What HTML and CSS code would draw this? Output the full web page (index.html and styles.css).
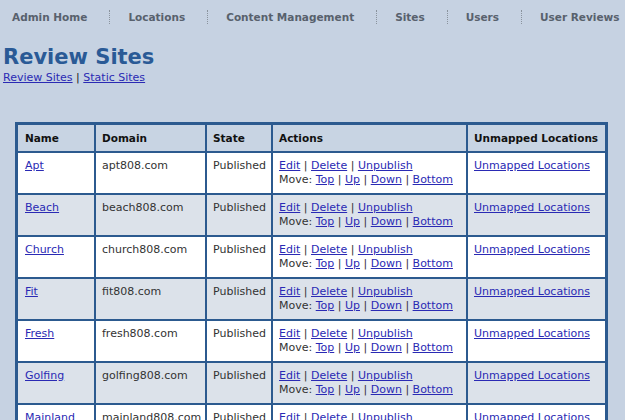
FILE: index.html
```html
<!DOCTYPE html>
<html>
<head>
<meta charset="utf-8">
<link rel="stylesheet" href="styles.css">
</head>
<body>
<ul class="nav">
  <li class="nav-item">Admin Home</li>
  <li class="nav-item">Locations</li>
  <li class="nav-item">Content Management</li>
  <li class="nav-item">Sites</li>
  <li class="nav-item">Users</li>
  <li class="nav-item last">User Reviews</li>
</ul>
<div class="content">
  <h1 class="title">Review Sites</h1>
  <div class="sublinks"><a href="#">Review Sites</a> | <a href="#">Static Sites</a></div>
  <table class="sites">
    <colgroup>
      <col class="c1"><col class="c2"><col class="c3"><col class="c4"><col class="c5">
    </colgroup>
    <thead>
      <tr><th>Name</th><th>Domain</th><th>State</th><th>Actions</th><th>Unmapped Locations</th></tr>
    </thead>
    <tbody>
      <tr><td><a href="#">Apt</a></td><td>apt808.com</td><td>Published</td><td><a href="#">Edit</a> | <a href="#">Delete</a> | <a href="#">Unpublish</a><br>Move: <a href="#">Top</a> | <a href="#">Up</a> | <a href="#">Down</a> | <a href="#">Bottom</a></td><td><a href="#">Unmapped Locations</a></td></tr>
      <tr><td><a href="#">Beach</a></td><td>beach808.com</td><td>Published</td><td><a href="#">Edit</a> | <a href="#">Delete</a> | <a href="#">Unpublish</a><br>Move: <a href="#">Top</a> | <a href="#">Up</a> | <a href="#">Down</a> | <a href="#">Bottom</a></td><td><a href="#">Unmapped Locations</a></td></tr>
      <tr><td><a href="#">Church</a></td><td>church808.com</td><td>Published</td><td><a href="#">Edit</a> | <a href="#">Delete</a> | <a href="#">Unpublish</a><br>Move: <a href="#">Top</a> | <a href="#">Up</a> | <a href="#">Down</a> | <a href="#">Bottom</a></td><td><a href="#">Unmapped Locations</a></td></tr>
      <tr><td><a href="#">Fit</a></td><td>fit808.com</td><td>Published</td><td><a href="#">Edit</a> | <a href="#">Delete</a> | <a href="#">Unpublish</a><br>Move: <a href="#">Top</a> | <a href="#">Up</a> | <a href="#">Down</a> | <a href="#">Bottom</a></td><td><a href="#">Unmapped Locations</a></td></tr>
      <tr><td><a href="#">Fresh</a></td><td>fresh808.com</td><td>Published</td><td><a href="#">Edit</a> | <a href="#">Delete</a> | <a href="#">Unpublish</a><br>Move: <a href="#">Top</a> | <a href="#">Up</a> | <a href="#">Down</a> | <a href="#">Bottom</a></td><td><a href="#">Unmapped Locations</a></td></tr>
      <tr><td><a href="#">Golfing</a></td><td>golfing808.com</td><td>Published</td><td><a href="#">Edit</a> | <a href="#">Delete</a> | <a href="#">Unpublish</a><br>Move: <a href="#">Top</a> | <a href="#">Up</a> | <a href="#">Down</a> | <a href="#">Bottom</a></td><td><a href="#">Unmapped Locations</a></td></tr>
      <tr><td><a href="#">Mainland</a></td><td>mainland808.com</td><td>Published</td><td><a href="#">Edit</a> | <a href="#">Delete</a> | <a href="#">Unpublish</a><br>Move: <a href="#">Top</a> | <a href="#">Up</a> | <a href="#">Down</a> | <a href="#">Bottom</a></td><td><a href="#">Unmapped Locations</a></td></tr>
    </tbody>
  </table>
</div>
</body>
</html>
```
FILE: styles.css
```css
html, body {
  margin: 0;
  padding: 0;
  background: #c6d2e2;
  font-family: "DejaVu Sans", Verdana, sans-serif;
  font-size: 11px;
  line-height: 14px;
  color: #333;
  overflow: hidden;
}
a { color: #2a2ab4; text-decoration: underline; }

.nav {
  list-style: none;
  margin: 0;
  padding: 10px 0 0 12px;
  display: flex;
  white-space: nowrap;
}
.nav-item {
  font-size: 10.5px;
  font-weight: bold;
  line-height: 14px;
  color: #58616d;
  padding: 0 22px 0 18px;
  border-right: 1px dotted #8a939d;
}
.nav-item:first-child { padding-left: 0; }
.nav-item.last { border-right: none; }

.content {
  padding: 21px 0 0 3px;
}
.title {
  margin: 0;
  font-size: 21px;
  line-height: 24px;
  font-weight: bold;
  color: #2a5a96;
}
.sublinks {
  margin-top: 2px;
  line-height: 14px;
  color: #222;
}

.sites {
  margin: 37px 0 0 12px;
  border: 2px solid #2c5a8f;
  border-collapse: separate;
  border-spacing: 0;
  table-layout: fixed;
  width: 593px;
}
.c1 { width: 78px; }
.c2 { width: 111px; }
.c3 { width: 66px; }
.c4 { width: 195px; }
.c5 { width: 139px; }

.sites th, .sites td {
  box-sizing: border-box;
  border: 1px solid #2c5a8f;
  padding: 6px 5px 6px 6px;
  text-align: left;
  vertical-align: top;
  white-space: nowrap;
  overflow: hidden;
}
.sites th:first-child, .sites td:first-child { padding-left: 7px; }
.sites th {
  background: #c8d4e3;
  color: #111;
  font-weight: bold;
  font-size: 10.5px;
}
.sites tbody tr:nth-child(odd) td { background: #ffffff; }
.sites tbody tr:nth-child(even) td { background: #dce2ea; }
```
